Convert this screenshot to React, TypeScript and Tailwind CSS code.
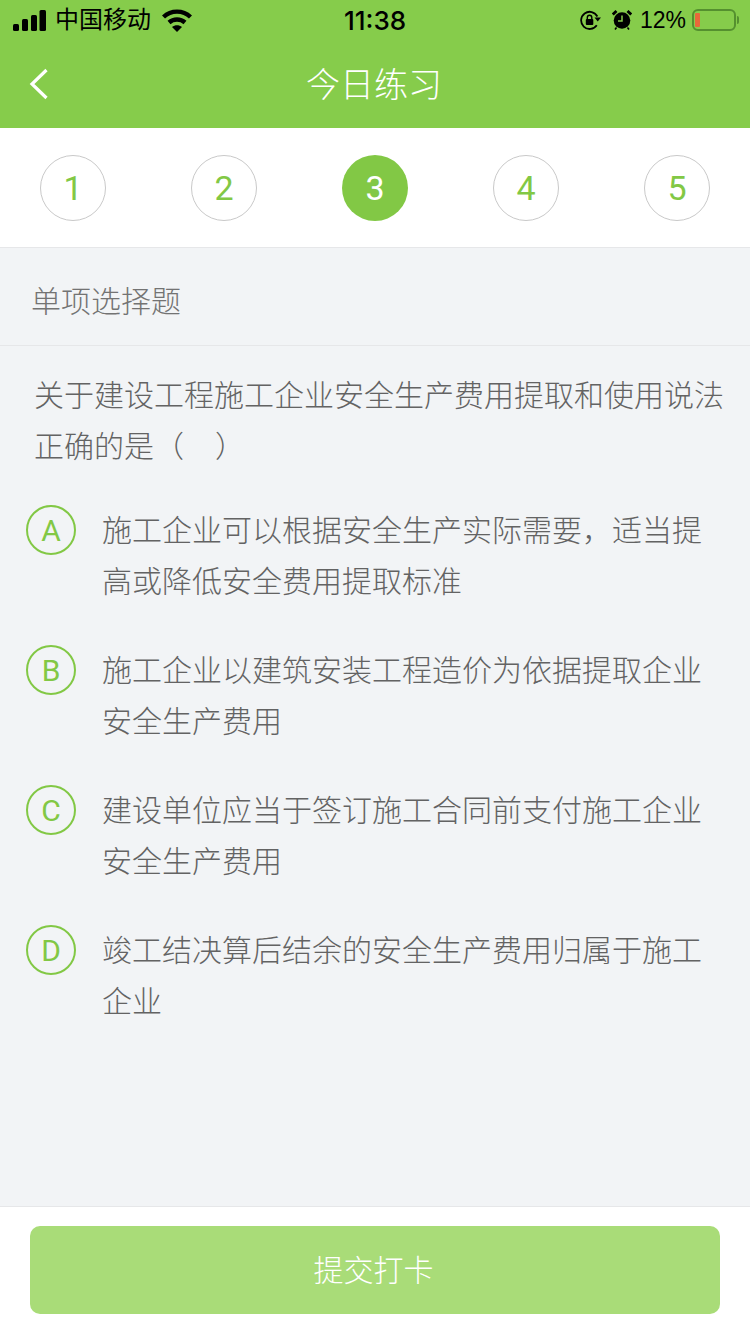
const cjk = "font-['Liberation_Sans','Noto_Sans_CJK_SC',sans-serif] font-light";
const latin = "font-['Roboto',sans-serif] font-normal";

const options = [
  { key: "A", lines: ["施工企业可以根据安全生产实际需要，适当提", "高或降低安全费用提取标准"] },
  { key: "B", lines: ["施工企业以建筑安装工程造价为依据提取企业", "安全生产费用"] },
  { key: "C", lines: ["建设单位应当于签订施工合同前支付施工企业", "安全生产费用"] },
  { key: "D", lines: ["竣工结决算后结余的安全生产费用归属于施工", "企业"] },
];

function SignalIcon() {
  return (
    <svg width="33" height="21" viewBox="0 0 33 21" fill="#000">
      <rect x="0" y="14" width="6" height="7" rx="1.5" />
      <rect x="9" y="9" width="6" height="12" rx="1.5" />
      <rect x="18" y="5" width="6" height="16" rx="1.5" />
      <rect x="26.500" y="0" width="6.500" height="21" rx="1.5" />
    </svg>
  );
}

function WifiIcon() {
  return (
    <svg width="30" height="23" viewBox="0 0 30 23" fill="none" stroke="#000" strokeWidth="4.4">
      <path d="M1.5 8C9 .8 21 .8 28.500 8" />
      <path d="M7 13.500C11.500 9.500 18.500 9.500 23 13.500" />
      <path d="M15 23 10 18C13 15.800 17 15.800 20 18Z" fill="#000" stroke="none" />
    </svg>
  );
}

function RotationLockIcon() {
  return (
    <svg width="21" height="20" viewBox="0 0 21 20" fill="none">
      <path d="M16.800 15.300A8.600 8.600 0 1 1 17.400 6.500" stroke="#000" strokeWidth="1.800" />
      <path d="M14.500 7.500H21L17.700 11.500Z" fill="#000" />
      <rect x="5.800" y="9" width="7.500" height="6" rx="1" fill="#000" />
      <path d="M7.300 9.500V7.500a2.250 2.250 0 0 1 4.500 0V9.500" stroke="#000" strokeWidth="1.400" />
    </svg>
  );
}

function AlarmIcon() {
  return (
    <svg width="20" height="20" viewBox="0 0 20 20" fill="none">
      <circle cx="10" cy="10.500" r="8.300" fill="#000" />
      <path d="M10 5.500V11H6" stroke="#86cc4b" strokeWidth="1.500" />
      <path d="M.8 4.500 4.500 1 M19.200 4.500 15.500 1" stroke="#000" strokeWidth="2.800" />
      <path d="M4.500 17.500 3 19.500 M15.500 17.500 17 19.500" stroke="#000" strokeWidth="1.600" />
    </svg>
  );
}

function BatteryIcon() {
  return (
    <div className="flex items-center gap-[1px]">
      <div className="flex h-[22px] w-[44px] items-center rounded-[6px] border-2 border-[#55902f] pl-[1px]">
        <div className="h-[14px] w-[5px] rounded-[1px] bg-[#e8683a]" />
      </div>
      <div className="h-[8px] w-[2px] rounded-r-full bg-[#55902f]" />
    </div>
  );
}

function StatusBar() {
  return (
    <div className="relative flex h-[40px] items-center justify-between pl-[13px] pr-[11px] text-black">
      <div className="flex items-center">
        <SignalIcon />
        <span className="ml-[9px] font-['Liberation_Sans','Noto_Sans_CJK_SC',sans-serif] text-[24px] leading-[42px]">中国移动</span>
        <span className="ml-[11px]"><WifiIcon /></span>
      </div>
      <div className="absolute inset-x-0 top-0 text-center font-['Inter',sans-serif] text-[26px] font-medium leading-[41px]">
        11:38
      </div>
      <div className="flex items-center">
        <RotationLockIcon />
        <span className="ml-[11px]"><AlarmIcon /></span>
        <span className="ml-[8px] mr-[6px] font-['Liberation_Sans',sans-serif] text-[23px] leading-[41px]">12%</span>
        <BatteryIcon />
      </div>
    </div>
  );
}

function NavBar() {
  return (
    <div className="relative flex h-[88px] items-center justify-center pr-[2px] pt-[2px]">
      <svg className="absolute left-[28px] top-[28px]" width="22" height="32" viewBox="0 0 22 32" fill="none" stroke="#fff" strokeWidth="3.2">
        <path d="M18.500 2 4 16l14.500 14" />
      </svg>
      <span className={`${cjk} text-[34px] text-white`}>今日练习</span>
    </div>
  );
}

function Steps() {
  return (
    <div className="flex h-[120px] items-start justify-between border-b border-[#e6e7e9] bg-white px-[40px] pt-[27px]">
      {[1, 2, 3, 4, 5].map((n) => (
        <div
          key={n}
          className={
            n === 3
              ? `${latin} flex h-[66px] w-[66px] items-center justify-center rounded-full bg-[#82c845] text-[34px] text-white`
              : `${latin} flex h-[66px] w-[66px] items-center justify-center rounded-full border border-[#c9c9c9] text-[34px] text-[#82c845]`
          }
        >
          {n}
        </div>
      ))}
    </div>
  );
}

function Option({ letter, lines }: { letter: string; lines: string[] }) {
  return (
    <div className="flex">
      <div className={`${latin} flex h-[50px] w-[50px] shrink-0 items-center justify-center rounded-full border-2 border-[#82c845] text-[30px] text-[#82c845]`}>
        {letter}
      </div>
      <div className={`${cjk} ml-[26px] whitespace-nowrap text-[30px] leading-[51px] text-[#636363]`}>
        {lines.map((l) => (
          <div key={l}>{l}</div>
        ))}
      </div>
    </div>
  );
}

export default function App() {
  return (
    <div className="flex h-[1334px] w-[750px] flex-col overflow-hidden bg-[#f2f4f6]">
      <div className="bg-[#86cc4b]">
        <StatusBar />
        <NavBar />
      </div>
      <Steps />
      <div className={`${cjk} flex h-[98px] items-center border-b border-[#e6e7e9] pl-[31px] pt-[9px] text-[30px] text-[#737373]`}>
        单项选择题
      </div>
      <div className={`${cjk} whitespace-nowrap pl-[34px] pt-[24px] text-[30px] leading-[51px] text-[#636363]`}>
        <div>关于建设工程施工企业安全生产费用提取和使用说法</div>
        <div>正确的是（&nbsp;&nbsp;&nbsp;<span className="ml-[6px]">）</span></div>
      </div>
      <div className="flex flex-1 flex-col gap-[38px] pl-[26px] pt-[33px]">
        {options.map((o) => (
          <Option key={o.key} letter={o.key} lines={o.lines} />
        ))}
      </div>
      <div className="flex h-[128px] items-start border-t border-[#e6e7e9] bg-white px-[30px] pt-[19px]">
        <div className={`${cjk} flex h-[88px] w-full items-center justify-center rounded-[10px] bg-[#a9dc78] pr-[3px] text-[30px] text-white`}>
          提交打卡
        </div>
      </div>
    </div>
  );
}
